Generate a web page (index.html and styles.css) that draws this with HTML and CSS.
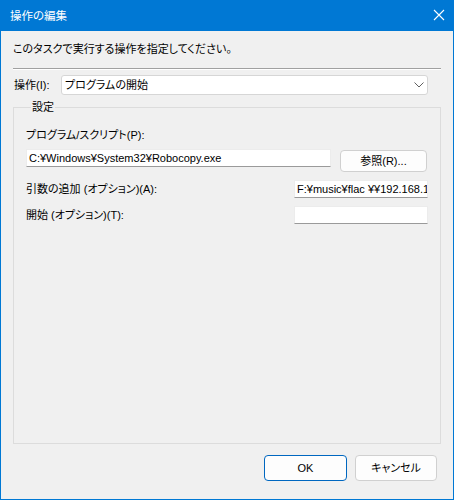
FILE: index.html
```html
<!DOCTYPE html>
<html lang="ja">
<head>
<meta charset="utf-8">
<link rel="stylesheet" href="styles.css">
</head>
<body>
<div class="window">
  <div class="titlebar">
    <span class="title">操作の編集</span>
    <svg class="close" width="12" height="12" viewBox="0 0 12 12"><path d="M1 1L11 11M11 1L1 11" stroke="#fff" stroke-width="1.1" fill="none"/></svg>
  </div>
  <div class="content">
    <div class="instruction">このタスクで実行する操作を指定してください。</div>
    <div class="separator"></div>
    <div class="action-row">
      <span class="action-label">操作(I):</span>
      <div class="combo">
        <span>プログラムの開始</span>
        <svg class="chevron" width="10" height="6" viewBox="0 0 10 6"><path d="M0.5 0.5L5 5L9.5 0.5" stroke="#606060" stroke-width="1" fill="none"/></svg>
      </div>
    </div>
    <div class="group">
      <div class="group-title">設定</div>
      <div class="field-label">プログラム/スクリプト(P):</div>
      <div class="path-row">
        <div class="textbox path-box">C:¥Windows¥System32¥Robocopy.exe</div>
        <div class="button browse">参照(R)...</div>
      </div>
      <div class="opt-row first">
        <span class="opt-label">引数の追加 (オプション)(A):</span>
        <div class="textbox opt-box">F:¥music¥flac ¥¥192.168.1.10¥music</div>
      </div>
      <div class="opt-row">
        <span class="opt-label">開始 (オプション)(T):</span>
        <div class="textbox opt-box"></div>
      </div>
    </div>
    <div class="buttons">
      <div class="button ok">OK</div>
      <div class="button cancel">キャンセル</div>
    </div>
  </div>
</div>
</body>
</html>
```
FILE: styles.css
```css
* { box-sizing: border-box; }
html, body { margin: 0; padding: 0; }
body {
  font-family: "Liberation Sans", "Noto Sans CJK JP", sans-serif;
  font-size: 11px;
  line-height: 16px;
  color: #000;
  font-feature-settings: "palt";
}
.window {
  width: 454px;
  height: 500px;
  border: 1px solid #0078d4;
  border-top: none;
  background: #f0f0f0;
  display: flex;
  flex-direction: column;
}
.titlebar {
  height: 31px;
  background: #0078d4;
  color: #fff;
  display: flex;
  align-items: center;
  justify-content: space-between;
  padding: 0 9px 0 10px;
  margin: 0 -1px;
}
.title { font-size: 11.5px; }
.close { display: block; margin-top: -1px; }
.content {
  padding: 0 12px;
  display: flex;
  flex-direction: column;
}
.instruction { margin-top: 10px; }
.separator {
  margin-top: 11px;
  height: 2px;
  border-top: 1px solid #a0a0a0;
  border-bottom: 1px solid #fff;
}
.action-row {
  margin-top: 5px;
  display: flex;
  align-items: center;
  height: 20px;
}
.action-label { width: 48px; padding-left: 1px; }
.combo {
  width: 367px;
  height: 20px;
  background: #fff;
  border: 1px solid #d6d6d6;
  border-radius: 3px;
  display: flex;
  align-items: center;
  justify-content: space-between;
  padding: 0 3px 0 3px;
}
.chevron { display: block; }
.group {
  margin-top: 12px;
  height: 337px;
  border: 1px solid #dcdcdc;
  padding: 0 12px;
  display: flex;
  flex-direction: column;
}
.group-title {
  margin-top: -9px;
  margin-left: 5px;
  padding: 0 1px;
  background: #f0f0f0;
  align-self: flex-start;
}
.field-label { margin-top: 12px; }
.path-row {
  margin-top: 6px;
  display: flex;
  align-items: flex-start;
  justify-content: space-between;
}
.textbox {
  height: 18px;
  background: #fff;
  border: 1px solid #ececec;
  border-bottom-color: #9a9a9a;
  padding: 0 2px;
  line-height: 16px;
  white-space: nowrap;
  overflow: hidden;
}
.path-box { width: 305px; }
.button {
  background: #fdfdfd;
  border: 1px solid #d0d0d0;
  border-radius: 4px;
  display: flex;
  align-items: center;
  justify-content: center;
}
.browse {
  width: 87px;
  height: 22px;
  margin-top: 1px;
  margin-right: 1px;
}
.opt-row {
  margin-top: 8px;
  display: flex;
  align-items: center;
  justify-content: space-between;
}
.opt-box { width: 134px; }
.buttons {
  margin-top: 11px;
  display: flex;
  justify-content: flex-end;
  gap: 8px;
  padding-right: 4px;
}
.buttons .button { height: 26px; }
.ok { width: 83px; border-color: #0067c0; }
.cancel { width: 82px; }
```
